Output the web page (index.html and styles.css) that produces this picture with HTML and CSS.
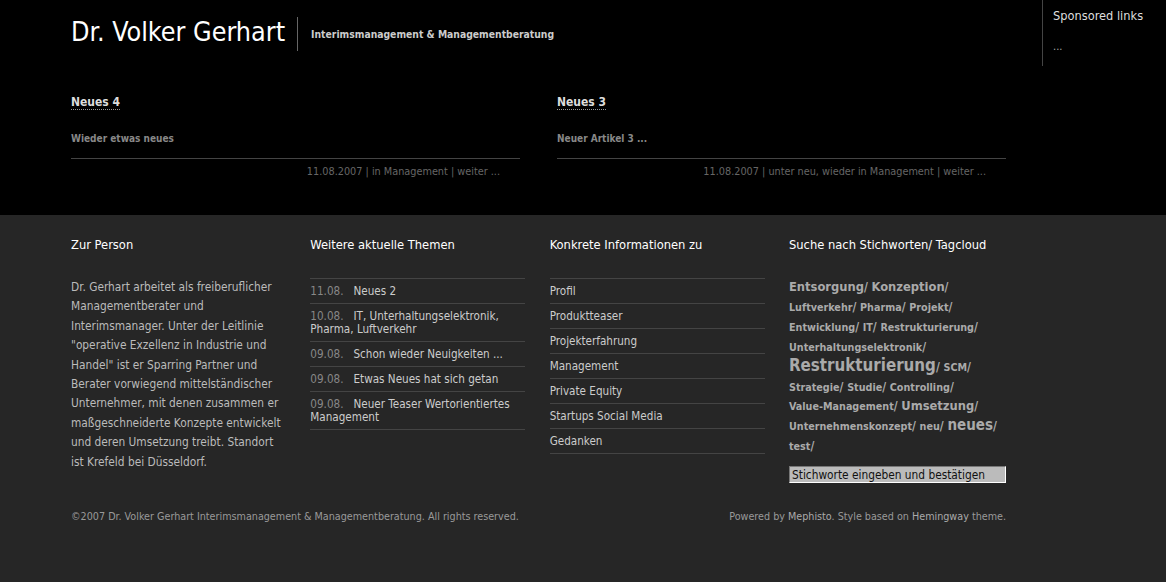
FILE: index.html
```html
<!DOCTYPE html>
<html lang="de">
<head>
<meta charset="utf-8">
<title>Dr. Volker Gerhart</title>
<link rel="stylesheet" href="styles.css">
</head>
<body>
<div class="top">
  <div class="wrap">
    <header class="masthead">
      <h1 class="site-title">Dr. Volker Gerhart</h1>
      <div class="tagline">Interimsmanagement &amp; Managementberatung</div>
    </header>
    <div class="posts">
      <article class="post">
        <h2 class="post-title"><a href="#">Neues 4</a></h2>
        <p class="post-excerpt">Wieder etwas neues</p>
        <div class="post-meta">11.08.2007 | in Management | weiter ...</div>
      </article>
      <article class="post">
        <h2 class="post-title"><a href="#">Neues 3</a></h2>
        <p class="post-excerpt">Neuer Artikel 3 ...</p>
        <div class="post-meta">11.08.2007 | unter neu, wieder in Management | weiter ...</div>
      </article>
    </div>
  </div>
  <aside class="sponsored">
    <div class="sponsored-title">Sponsored links</div>
    <div class="sponsored-body">...</div>
  </aside>
</div>
<div class="bottom">
  <div class="wrap">
    <div class="cols">
      <section class="col">
        <h3 class="col-title">Zur Person</h3>
        <p class="about">Dr. Gerhart arbeitet als freiberuflicher Managementberater und Interimsmanager. Unter der Leitlinie "operative Exzellenz in Industrie und Handel" ist er Sparring Partner und Berater vorwiegend mittelständischer Unternehmer, mit denen zusammen er maßgeschneiderte Konzepte entwickelt und deren Umsetzung treibt. Standort ist Krefeld bei Düsseldorf.</p>
      </section>
      <section class="col">
        <h3 class="col-title">Weitere aktuelle Themen</h3>
        <ul class="list">
          <li><span class="date">11.08.</span>Neues 2</li>
          <li><span class="date">10.08.</span>IT, Unterhaltungselektronik, Pharma, Luftverkehr</li>
          <li><span class="date">09.08.</span>Schon wieder Neuigkeiten ...</li>
          <li><span class="date">09.08.</span>Etwas Neues hat sich getan</li>
          <li><span class="date">09.08.</span>Neuer Teaser Wertorientiertes Management</li>
        </ul>
      </section>
      <section class="col">
        <h3 class="col-title">Konkrete Informationen zu</h3>
        <ul class="list">
          <li>Profil</li>
          <li>Produktteaser</li>
          <li>Projekterfahrung</li>
          <li>Management</li>
          <li>Private Equity</li>
          <li>Startups Social Media</li>
          <li>Gedanken</li>
        </ul>
      </section>
      <section class="col">
        <h3 class="col-title">Suche nach Stichworten/ Tagcloud</h3>
        <p class="tags"><span class="t3">Entsorgung</span>/ <span class="t3">Konzeption</span>/ <span class="t1">Luftverkehr</span>/ <span class="t1">Pharma</span>/ <span class="t1">Projekt</span>/ <span class="t1">Entwicklung</span>/ <span class="t1">IT</span>/ <span class="t1">Restrukturierung</span>/ <span class="t1">Unterhaltungselektronik</span>/ <span class="t5">Restrukturierung</span>/ <span class="t1">SCM</span>/ <span class="t1">Strategie</span>/ <span class="t1">Studie</span>/ <span class="t1">Controlling</span>/ <span class="t1 nowrap">Value-Management</span>/ <span class="t3">Umsetzung</span>/ <span class="t1">Unternehmenskonzept</span>/ <span class="t1">neu</span>/ <span class="t4">neues</span>/ <span class="t1">test</span>/</p>
        <input class="search" type="text" value="Stichworte eingeben und bestätigen">
      </section>
    </div>
    <footer class="foot">
      <div>©2007 Dr. Volker Gerhart Interimsmanagement &amp; Managementberatung. All rights reserved.</div>
      <div>Powered by <a href="#">Mephisto</a>. Style based on <a href="#">Hemingway</a> theme.</div>
    </footer>
  </div>
</div>
</body>
</html>
```

FILE: styles.css
```css
* { box-sizing: border-box; }
html, body { margin: 0; padding: 0; }
body {
  background: #262626;
  font-family: "DejaVu Sans Condensed", "DejaVu Sans", sans-serif;
  font-size: 11.8px;
  color: #bbb;
}
a { color: inherit; text-decoration: none; }
h1, h2, h3, p, ul { margin: 0; padding: 0; }

.top {
  background: #000;
  height: 215px;
  position: relative;
}
.wrap {
  width: 935px;
  margin-left: 71px;
}
.masthead {
  display: flex;
  align-items: center;
  height: 66px;
  padding-top: 2px;
}
.site-title {
  font-size: 26.7px;
  font-weight: normal;
  color: #fff;
  padding: 0 12px 4px 0;
  border-right: 1px solid #666;
  line-height: 30px;
}
.tagline {
  font-size: 10.3px;
  font-weight: bold;
  color: #ccc;
  padding-left: 13px;
}

.posts {
  display: grid;
  grid-template-columns: 449px 449px;
  column-gap: 37px;
  padding-top: 27px;
}
.post-title {
  font-size: 12px;
  font-weight: bold;
  color: #ddd;
  line-height: 18px;
}
.post-title a { border-bottom: 1px dotted #999; }
.post-excerpt {
  margin-top: 19px;
  font-size: 10px;
  font-weight: bold;
  color: #888;
  line-height: 18px;
  padding-bottom: 10px;
  border-bottom: 1px solid #444;
}
.post-meta {
  text-align: right;
  padding-right: 20px;
  color: #666;
  font-size: 10.8px;
  padding-top: 5px;
  line-height: 16px;
}

.sponsored {
  position: absolute;
  left: 1042px;
  top: 0;
  height: 66px;
  width: 124px;
  border-left: 1px solid #444;
  padding: 8px 0 0 10px;
  color: #ddd;
}
.sponsored-title { font-size: 12.7px; line-height: 16px; }
.sponsored-body { margin-top: 16px; font-size: 11px; color: #aaa; }

.bottom { padding-top: 21px; }
.cols {
  display: grid;
  grid-template-columns: repeat(4, 215px);
  column-gap: 24.33px;
}
.col-title {
  font-size: 12.8px;
  font-weight: normal;
  color: #fff;
  line-height: 18px;
  margin-bottom: 24px;
}
.about {
  width: 216px;
  line-height: 19.4px;
  color: #bbb;
}
.list { list-style: none; border-top: 1px solid #444; width: 215px; font-size: 11.6px; }
.list li {
  border-bottom: 1px solid #444;
  padding: 6px 0 5px;
  line-height: 13px;
  color: #ccc;
}
.date { color: #888; margin-right: 10px; }

.tags {
  line-height: 19.9px;
  color: #aaa;
  font-weight: bold;
}
.tags span { line-height: 14px; }
.tags .t1 { font-size: 10.7px; }
.tags .t3 { font-size: 12.8px; }
.tags .t4 { font-size: 15px; }
.tags .t5 { font-size: 16.8px; }
.nowrap { white-space: nowrap; }
.search {
  display: block;
  margin-top: 9px;
  width: 217px;
  height: 17px;
  padding: 0 2px;
  font-family: inherit;
  font-size: 11.8px;
  color: #111;
  background: #bbb;
  border: 1px solid #fff;
  border-top-color: #777;
  border-left-color: #777;
}

.foot {
  display: flex;
  justify-content: space-between;
  margin-top: 27px;
  color: #999;
  font-size: 10.7px;
  line-height: 14px;
}
.foot a { color: #aaa; }
```
